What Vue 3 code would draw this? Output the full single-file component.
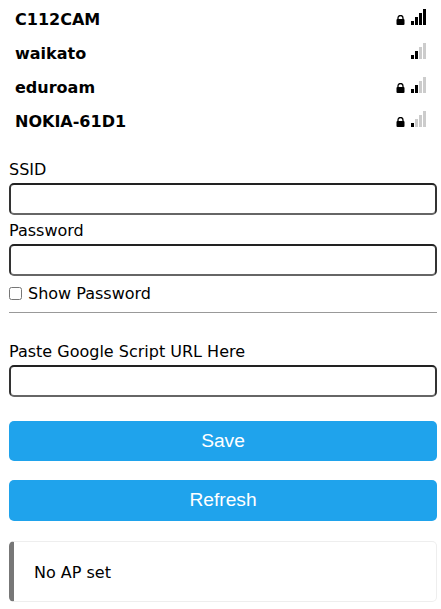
<template>
  <div class="page">
    <div class="networks">
      <div v-for="net in networks" :key="net.ssid" class="network">
        <span class="ssid">{{ net.ssid }}</span>
        <svg v-if="net.locked" class="lock" width="9" height="10" viewBox="0 0 9 10">
          <path d="M2 5V3a2.5 2.5 0 0 1 5 0V5" fill="none" stroke="#000" stroke-width="1.3" />
          <rect x="0.5" y="4" width="8" height="6" rx="1" fill="#000" />
        </svg>
        <div class="bars">
          <span
            v-for="n in 4"
            :key="n"
            class="bar"
            :class="{ on: n <= net.level }"
            :style="{ height: n * 4 + 'px' }"
          ></span>
        </div>
      </div>
    </div>

    <form class="form" @submit.prevent>
      <label class="label" for="ssid">SSID</label>
      <input id="ssid" class="input" type="text" />
      <label class="label" for="pass">Password</label>
      <input id="pass" class="input" type="password" />
      <label class="show">
        <input type="checkbox" class="check" />
        Show Password
      </label>
      <hr class="rule" />
      <label class="label" for="url">Paste Google Script URL Here</label>
      <input id="url" class="input" type="text" />
      <button class="btn save" type="button">Save</button>
      <button class="btn refresh" type="button">Refresh</button>
    </form>

    <div class="status">No AP set</div>
  </div>
</template>

<script setup>
const networks = [
  { ssid: 'C112CAM', locked: true, level: 4 },
  { ssid: 'waikato', locked: false, level: 2 },
  { ssid: 'eduroam', locked: true, level: 2 },
  { ssid: 'NOKIA-61D1', locked: true, level: 1 },
]
</script>

<style>
body {
  background: #fff;
}
</style>

<style scoped>
.page {
  padding: 2px 4px 0 9px;
  font-family: "DejaVu Sans", sans-serif;
  font-size: 16px;
  color: #000;
}

.network {
  display: flex;
  align-items: center;
  height: 34px;
  padding: 0 11px 0 6px;
}

.ssid {
  flex: 1;
  font-weight: bold;
}

.lock {
  margin: 2px 6px 0 0;
}

.bars {
  display: flex;
  align-items: flex-end;
  gap: 1px;
  height: 16px;
  margin-bottom: 4px;
}

.bar {
  width: 3px;
  background: #ccc;
}

.bar.on {
  background: #000;
}

.form {
  display: flex;
  flex-direction: column;
  margin-top: 22px;
}

.label {
  line-height: 19px;
  margin-bottom: 4px;
}

.input {
  box-sizing: border-box;
  width: 100%;
  height: 32px;
  border: 2px solid #000;
  border-color: #222 #333 #666 #333;
  border-radius: 5px;
  margin-bottom: 6px;
  padding: 0 6px;
  background: #fff;
}

.show {
  display: flex;
  align-items: center;
  line-height: 19px;
  margin-top: 2px;
}

.check {
  width: 13px;
  height: 13px;
  margin: 0 6px 0 0;
}

.rule {
  width: 100%;
  border: none;
  border-top: 1px solid #999;
  margin: 9px 0 29px;
}

.btn {
  height: 40px;
  border: none;
  border-radius: 5px;
  background: #1fa3ec;
  color: #fff;
  font-family: "Liberation Sans", sans-serif;
  font-size: 19.2px;
}

.save {
  margin-top: 18px;
}

.refresh {
  height: 41px;
  margin-top: 19px;
  padding-bottom: 3px;
}

.status {
  box-sizing: border-box;
  height: 61px;
  margin-top: 20px;
  display: flex;
  align-items: center;
  padding: 2px 0 0 20px;
  border: 1px solid #eee;
  border-left: 5px solid #777;
  border-radius: 5px;
}
</style>
